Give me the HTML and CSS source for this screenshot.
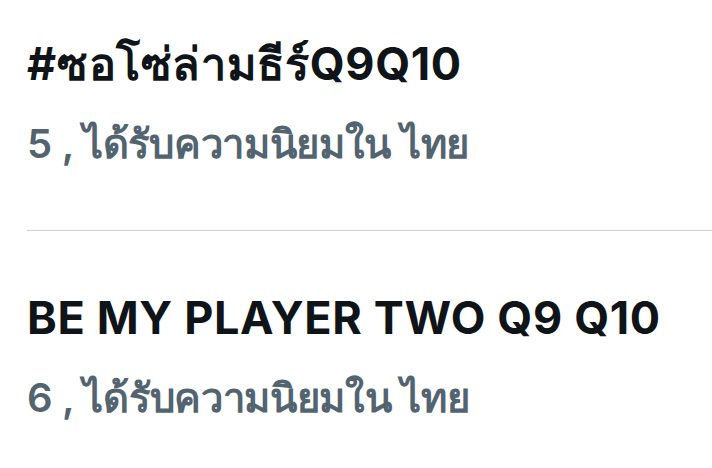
FILE: index.html
```html
<!DOCTYPE html>
<html lang="th">
<head>
    <meta charset="UTF-8">
    <meta name="viewport" content="width=device-width, initial-scale=1.0">
    <title>กำลังเป็นกระแส</title>
    <link rel="stylesheet" href="styles.css">
</head>
<body>
    <ul class="trends">
        <li class="trend">
            <div class="trend-title">#ซอโซ่ล่ามธีร์Q9Q10</div>
            <div class="trend-meta">5 , ได้รับความนิยมใน ไทย</div>
        </li>
        <li class="trend">
            <div class="trend-title">BE MY PLAYER TWO Q9 Q10</div>
            <div class="trend-meta">6 , ได้รับความนิยมใน ไทย</div>
        </li>
    </ul>
</body>
</html>
```

FILE: styles.css
```css
:root {
    --text-color: #0f1419;
    --muted-color: #536471;
    --divider-color: #cfd2d4;
}
body {
    margin: 0;
    padding: 0;
    background-color: #ffffff;
    font-family: Inter, "Liberation Sans", sans-serif;
}
.trends {
    list-style: none;
    margin: 0;
    padding: 0;
}
.trend {
    margin-left: 27px;
    padding: 37px 0 62px 0;
}
.trend + .trend {
    border-top: 1px solid var(--divider-color);
    padding-top: 60px;
}
.trend-title {
    color: var(--text-color);
    font-size: 45px;
    font-weight: 700;
    line-height: 54px;
    letter-spacing: 0.65px;
}
.trend-meta {
    color: var(--muted-color);
    font-size: 40px;
    font-weight: 600;
    line-height: 48px;
    letter-spacing: -0.3px;
    margin-top: 29px;
}
```
